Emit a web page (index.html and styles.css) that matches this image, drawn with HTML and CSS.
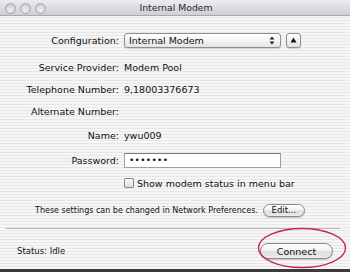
FILE: index.html
```html
<!DOCTYPE html>
<html>
<head>
<meta charset="utf-8">
<link rel="stylesheet" href="styles.css">
</head>
<body>
<div class="window">
  <div class="titlebar">
    <div class="lights">
      <span class="light"></span><span class="light"></span><span class="light"></span>
    </div>
    <div class="title">Internal Modem</div>
  </div>
  <div class="content">
    <div class="row config">
      <div class="label">Configuration:</div>
      <div class="value">
        <div class="popup">
          <span class="popup-text">Internal Modem</span>
          <svg class="popup-arrows" width="6" height="9" viewBox="0 0 6 9"><path d="M3 0.5 L5.5 3.5 H0.5 Z M3 8.5 L5.5 5.5 H0.5 Z" fill="#222"/></svg>
        </div>
        <div class="tri-btn"><svg width="7" height="6" viewBox="0 0 7 6"><path d="M3.5 0.5 L6.5 5.5 H0.5 Z" fill="#111"/></svg></div>
      </div>
    </div>
    <div class="row text first">
      <div class="label">Service Provider:</div>
      <div class="value">Modem Pool</div>
    </div>
    <div class="row text">
      <div class="label">Telephone Number:</div>
      <div class="value">9,18003376673</div>
    </div>
    <div class="row text">
      <div class="label">Alternate Number:</div>
      <div class="value"></div>
    </div>
    <div class="row text name">
      <div class="label">Name:</div>
      <div class="value">ywu009</div>
    </div>
    <div class="row pass">
      <div class="label">Password:</div>
      <div class="value"><div class="field">•••••••</div></div>
    </div>
    <div class="row check">
      <div class="label"></div>
      <div class="value"><span class="checkbox"></span><span>Show modem status in menu bar</span></div>
    </div>
    <div class="settings">
      <span class="note">These settings can be changed in Network Preferences.</span>
      <span class="btn edit">Edit...</span>
    </div>
    <div class="separator"></div>
    <div class="status">
      <span class="status-text">Status: Idle</span>
      <span class="btn connect">Connect</span>
    </div>
  </div>
  <svg class="circle" width="90" height="42" viewBox="0 0 90 42"><ellipse cx="45" cy="21" rx="43.5" ry="19.5" fill="none" stroke="#c8284a" stroke-width="1.4"/></svg>
</div>
</body>
</html>
```
FILE: styles.css
```css
html, body {
  margin: 0;
  padding: 0;
}
body {
  width: 350px;
  height: 272px;
  overflow: hidden;
  background: #3a3a3a;
  font-family: "DejaVu Sans", "Liberation Sans", sans-serif;
  color: #111;
}
.window {
  position: relative;
  width: 350px;
  height: 269px;
  background: repeating-linear-gradient(to bottom, #f6f6f6 0px, #f6f6f6 2px, #e7e7e7 2px, #e7e7e7 3px);
  display: flex;
  flex-direction: column;
}
.titlebar {
  height: 15px;
  border-bottom: 1px solid #a8a8ae;
  background: linear-gradient(to bottom, #ececf0 0%, #dcdce2 50%, #cfd0d6 100%);
  position: relative;
  display: flex;
  align-items: center;
}
.lights {
  display: flex;
  gap: 4px;
  padding-left: 5px;
}
.light {
  width: 9px;
  height: 9px;
  border-radius: 50%;
  border: 1px solid #a4a4ac;
  background: radial-gradient(circle at 50% 70%, #f2f2f6 0%, #d4d4da 60%, #bcbcc4 100%);
  margin-top: 1px;
}
.title {
  flex: 1;
  text-align: center;
  font-size: 9.3px;
  color: #2a2a2a;
  margin-right: 48px;
  padding-left: 4px;
}
.content {
  display: flex;
  flex-direction: column;
}
.row {
  display: flex;
  align-items: center;
  font-size: 9.5px;
}
.label {
  width: 119px;
  text-align: right;
  flex: none;
}
.value {
  padding-left: 5px;
  display: flex;
  align-items: center;
}
.config {
  margin-top: 16px;
  height: 16px;
}
.popup {
  width: 146px;
  height: 13px;
  border: 1px solid #8e8e8e;
  border-radius: 3px;
  background: linear-gradient(to bottom, #ffffff 0%, #f4f4f4 50%, #e4e4e4 100%);
  display: flex;
  align-items: center;
  justify-content: space-between;
  padding: 0 5px 0 4px;
  box-sizing: content-box;
  box-shadow: 0 1px 1px rgba(0,0,0,0.15);
}
.popup-text {
  font-size: 9.5px;
}
.popup-arrows {
  display: block;
}
.tri-btn {
  width: 13px;
  height: 13px;
  margin-left: 5px;
  border: 1px solid #8e8e8e;
  border-radius: 3px;
  background: linear-gradient(to bottom, #ffffff 0%, #efefef 60%, #e2e2e2 100%);
  display: flex;
  align-items: center;
  justify-content: center;
  box-shadow: 0 1px 1px rgba(0,0,0,0.15);
}
.tri-btn svg {
  display: block;
}
.text {
  height: 22px;
  line-height: 22px;
}
.text.first {
  margin-top: 9px;
}
.text.name {
  margin-top: 2px;
}
.pass {
  margin-top: 6px;
  height: 15px;
}
.field {
  width: 151px;
  height: 13px;
  border: 1px solid #a0a0a0;
  border-top-color: #7a7a7a;
  background: #fff;
  font-size: 9px;
  line-height: 13px;
  padding-left: 4px;
  letter-spacing: 0.3px;
}
.check {
  margin-top: 10px;
  height: 10px;
}
.checkbox {
  width: 8px;
  height: 8px;
  border: 1px solid #8a8a8a;
  border-radius: 1px;
  background: linear-gradient(to bottom, #fafafa, #dcdcdc);
  margin-right: 3px;
}
.settings {
  margin-top: 15px;
  height: 14px;
  display: flex;
  align-items: center;
  padding-left: 35px;
}
.note {
  font-size: 8px;
}
.btn {
  display: flex;
  align-items: center;
  justify-content: center;
  border: 1px solid #8a8a8a;
  border-radius: 8px;
  background: linear-gradient(to bottom, #ffffff 0%, #f2f2f2 45%, #dedede 55%, #ececec 100%);
  box-shadow: 0 1px 1px rgba(0,0,0,0.2);
  box-sizing: border-box;
}
.edit {
  margin-left: 5px;
  width: 42px;
  height: 13px;
  font-size: 8.5px;
}
.separator {
  margin: 11px 10px 0 6px;
  height: 1px;
  background: #b4b4b4;
  border-bottom: 1px solid #fbfbfb;
}
.status {
  margin-top: 13px;
  height: 16px;
  display: flex;
  align-items: center;
  justify-content: space-between;
  padding: 0 17px 0 17px;
}
.status-text {
  font-size: 8.5px;
}
.connect {
  width: 73px;
  height: 16px;
  font-size: 9.5px;
}
.circle {
  position: absolute;
  left: 257px;
  top: 227px;
  display: block;
}
```
